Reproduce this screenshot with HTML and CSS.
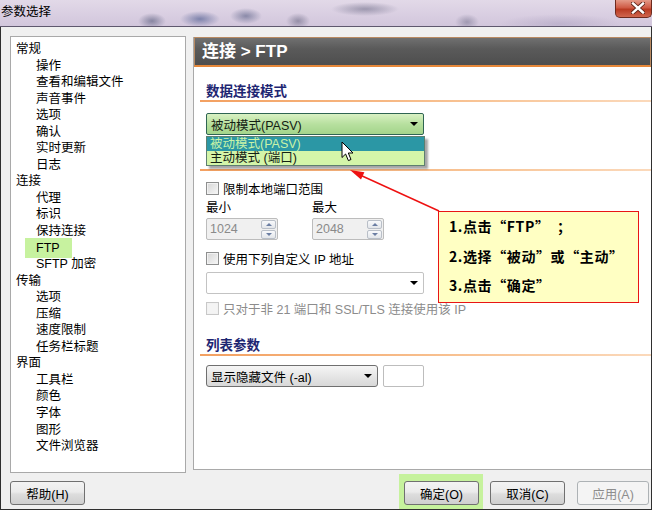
FILE: index.html
```html
<!DOCTYPE html>
<html lang="zh-CN">
<head>
<meta charset="utf-8">
<title>参数选择</title>
<link rel="stylesheet" href="styles.css">
</head>
<body>
<div class="window">
  <header class="titlebar">
    <span class="title">参数选择</span>
    <button class="close-btn" aria-label="关闭">
      <svg width="14" height="12" viewBox="0 0 14 12">
        <path d="M2 1.5 L12 10.5 M12 1.5 L2 10.5" stroke="#5e2418" stroke-width="4.2" stroke-linecap="square"/>
        <path d="M2 1.5 L12 10.5 M12 1.5 L2 10.5" stroke="#ffffff" stroke-width="2.4" stroke-linecap="square"/>
      </svg>
    </button>
  </header>

  <div class="frame">
    <div class="main">
      <ul class="tree">
        <li class="node">常规</li>
        <li class="leaf">操作</li>
        <li class="leaf">查看和编辑文件</li>
        <li class="leaf">声音事件</li>
        <li class="leaf">选项</li>
        <li class="leaf">确认</li>
        <li class="leaf">实时更新</li>
        <li class="leaf">日志</li>
        <li class="node">连接</li>
        <li class="leaf">代理</li>
        <li class="leaf">标识</li>
        <li class="leaf">保持连接</li>
        <li class="leaf"><span class="selected">FTP</span></li>
        <li class="leaf">SFTP 加密</li>
        <li class="node">传输</li>
        <li class="leaf">选项</li>
        <li class="leaf">压缩</li>
        <li class="leaf">速度限制</li>
        <li class="leaf">任务栏标题</li>
        <li class="node">界面</li>
        <li class="leaf">工具栏</li>
        <li class="leaf">颜色</li>
        <li class="leaf">字体</li>
        <li class="leaf">图形</li>
        <li class="leaf">文件浏览器</li>
      </ul>

      <section class="page">
        <div class="page-header">连接 &gt; FTP</div>
        <div class="page-body">
          <h3 class="group-title">数据连接模式</h3>
          <div class="combo combo-green">
            <span>被动模式(PASV)</span>
            <i class="combo-arrow"></i>
            <ul class="combo-list">
              <li class="opt opt-hot">被动模式(PASV)</li>
              <li class="opt">主动模式 (端口)</li>
            </ul>
          </div>

          <div class="group-rule"></div>

          <label class="check check-first"><i class="box"></i>限制本地端口范围</label>

          <div class="ports">
            <span class="port-label">最小</span>
            <span class="port-label">最大</span>
            <div class="spin">
              <span>1024</span>
              <span class="spin-btns"><i class="up"></i><i class="down"></i></span>
            </div>
            <div class="spin">
              <span>2048</span>
              <span class="spin-btns"><i class="up"></i><i class="down"></i></span>
            </div>
          </div>

          <label class="check check-ip"><i class="box"></i>使用下列自定义 IP 地址</label>

          <div class="combo combo-ip"><i class="combo-arrow"></i></div>

          <label class="check check-off"><i class="box"></i>只对于非 21 端口和 SSL/TLS 连接使用该 IP</label>

          <h3 class="group-title group-list">列表参数</h3>
          <div class="list-row">
            <div class="combo combo-btn">
              <span>显示隐藏文件 (-al)</span>
              <i class="combo-arrow"></i>
            </div>
            <div class="small-field"></div>
          </div>
        </div>
      </section>
    </div>

    <div class="buttons">
      <button class="btn">帮助(H)</button>
      <span class="spacer"></span>
      <span class="ok-mark"><button class="btn">确定(O)</button></span>
      <button class="btn btn-cancel">取消(C)</button>
      <button class="btn btn-off">应用(A)</button>
    </div>
  </div>

  <!-- callout with steps, pointing at the transfer-mode list -->
  <svg class="callout-arrow" width="110" height="60" viewBox="0 0 110 60">
    <line x1="99" y1="51" x2="20" y2="15" stroke="#ee1111" stroke-width="1.4"/>
    <polygon points="10,10 24.4,12.3 21,19.5" fill="#ee1111"/>
  </svg>
  <div class="callout">
    <p>1.点击“FTP”　；</p>
    <p>2.选择“被动”或“主动”</p>
    <p>3.点击“确定”</p>
  </div>

  <svg class="cursor" width="14" height="22" viewBox="0 0 14 22">
    <path d="M1 1 L1 16.5 L4.6 13 L7.4 19.6 L10 18.5 L7.3 12 L12 12 Z" fill="#ffffff" stroke="#000000" stroke-width="1" stroke-linejoin="miter"/>
  </svg>
</div>
</body>
</html>
```

FILE: styles.css
```css
* {
  box-sizing: border-box;
  margin: 0;
  padding: 0;
}

html,
body {
  width: 652px;
  height: 510px;
  overflow: hidden;
}

body {
  font-family: "Liberation Sans", "Noto Sans CJK SC", sans-serif;
  font-size: 12.5px;
  color: #000;
  background: #f0f0f0;
}

.window {
  position: relative;
  width: 652px;
  height: 510px;
  display: flex;
  flex-direction: column;
}

/* ---------- title bar ---------- */
.titlebar {
  height: 27px;
  flex: none;
  display: flex;
  align-items: flex-start;
  border-bottom: 1px solid #5f586e;
  background:
    radial-gradient(ellipse 14px 8px at 152px 21px, rgba(70, 76, 110, 0.55), transparent),
    radial-gradient(ellipse 20px 8px at 200px 19px, rgba(52, 70, 128, 0.55), transparent),
    radial-gradient(ellipse 16px 8px at 246px 16px, rgba(60, 70, 112, 0.5), transparent),
    radial-gradient(ellipse 12px 8px at 298px 21px, rgba(70, 70, 100, 0.45), transparent),
    radial-gradient(ellipse 34px 7px at 365px 9px, rgba(80, 80, 110, 0.45), transparent),
    radial-gradient(ellipse 12px 8px at 467px 22px, rgba(80, 80, 110, 0.4), transparent),
    radial-gradient(ellipse 60px 10px at 560px 24px, rgba(150, 140, 175, 0.35), transparent),
    linear-gradient(#e2d9e8, #d2c6dc);
}

.title {
  padding-left: 1px;
  line-height: 25px;
  font-size: 12.5px;
  color: #000;
}

.close-btn {
  margin-left: auto;
  width: 37px;
  height: 18px;
  border: 1px solid #6d2a1e;
  border-top: none;
  border-radius: 0 0 5px 5px;
  background: linear-gradient(#e49a88, #cf5b45 45%, #b93a22 55%, #d0664e);
  display: flex;
  align-items: center;
  justify-content: center;
}

.close-btn svg {
  margin-left: 8px;
  margin-top: -1px;
}

/* ---------- dialog frame ---------- */
.frame {
  flex: 1;
  display: flex;
  flex-direction: column;
  border: 1px solid #2f2f2f;
  border-top: none;
  padding: 9px 0 0 9px;
}

.main {
  display: flex;
  align-items: flex-start;
  gap: 7px;
  height: 437px;
}

.tree {
  list-style: none;
  width: 176px;
  height: 437px;
  flex: none;
  background: #fff;
  border: 1px solid #a9a9a9;
  padding-top: 4px;
  line-height: 16.55px;
}

.tree .node {
  padding-left: 5px;
}

.tree .leaf {
  padding-left: 25px;
}

.selected {
  display: inline-block;
  line-height: 16px;
  padding: 2px 12px 2px 11px;
  margin: -2px -12px -2px -11px;
  background: #c7f29f;
}

/* ---------- settings page ---------- */
.page {
  flex: 1;
  height: 433px;
  margin-top: 1px;
  background: #fff;
  border-left: 1px solid #a9a9a9;
  border-bottom: 1px solid #a9a9a9;
  display: flex;
  flex-direction: column;
}

.page-header {
  height: 30px;
  padding-left: 7px;
  line-height: 27px;
  font-size: 17px;
  font-weight: bold;
  color: #fff;
  background: linear-gradient(#707070, #5a5a5a 40%, #4e4e4e);
  border: 1px solid #b98a62;
  border-bottom: 2px solid #e6883a;
}

.page-body {
  padding-left: 12px;
}

.group-title {
  margin-top: 17px;
  margin-left: -6px;
  padding-left: 6px;
  padding-bottom: 2px;
  line-height: 16px;
  font-size: 13.5px;
  font-weight: bold;
  color: #1e2672;
  background: linear-gradient(to right, #f3a061, #f8c394 60%, #fbd9bb) left bottom / 100% 2px no-repeat;
}

.group-rule {
  margin-top: 34px;
  margin-left: -6px;
  height: 2px;
  background: linear-gradient(to right, #f3a061, #f8c394 60%, #fbd9bb);
}

.group-list {
  margin-top: 22px;
}

/* ---------- combo boxes ---------- */
.combo {
  position: relative;
  display: flex;
  align-items: center;
  width: 218px;
  height: 22px;
  padding-left: 4px;
  border: 1px solid #bdbdbd;
  border-radius: 2px;
  background: #fff;
}

.combo-arrow {
  margin-left: auto;
  margin-right: 5px;
  width: 0;
  height: 0;
  border-top: 4px solid #000;
  border-left: 4px solid transparent;
  border-right: 4px solid transparent;
}

.combo-green {
  margin-top: 11px;
  border-color: #2f6553;
  background: linear-gradient(#d9f1c3, #b7e09f 50%, #a3d48b);
  color: #132013;
}

.combo-list {
  position: absolute;
  left: -1px;
  top: 22px;
  width: 219px;
  list-style: none;
  border: 1px solid #5d7f70;
  box-shadow: 3px 3px 2px rgba(0, 0, 0, 0.35);
  background: #d4f5a9;
  z-index: 2;
}

.opt {
  height: 14px;
  line-height: 14px;
  padding-left: 3px;
  color: #122012;
}

.opt-hot {
  background: #2b97a5;
  color: #c9f3a7;
}

.combo-ip {
  margin-top: 6px;
  border-color: #c3c3c3;
}

.combo-btn {
  width: 172px;
  border-color: #6f6f6f;
  border-radius: 3px;
  background: linear-gradient(#f5f5f5, #e6e6e6 50%, #d8d8d8);
}

.list-row {
  margin-top: 9px;
  display: flex;
  gap: 5px;
}

.small-field {
  width: 41px;
  height: 22px;
  border: 1px solid #bdbdbd;
  border-radius: 2px;
  background: #fff;
}

/* ---------- check boxes ---------- */
.check {
  display: flex;
  align-items: center;
  gap: 4px;
  height: 16px;
}

.box {
  width: 13px;
  height: 13px;
  flex: none;
  border: 1px solid #8e8f8f;
  background: linear-gradient(135deg, #d6d6d6, #f7f7f7);
  box-shadow: inset 0 0 0 1px #f2f2f2;
}

.check-first {
  margin-top: 9px;
}

.check-ip {
  margin-top: 10px;
}

.check-off {
  margin-top: 6px;
  color: #8c8c8c;
}

.check-off .box {
  border-color: #c8c8c8;
  background: #f4f4f4;
}

/* ---------- port range ---------- */
.ports {
  display: grid;
  grid-template-columns: 106px 106px;
  row-gap: 2px;
  margin-top: 4px;
}

.port-label {
  line-height: 16px;
}

.spin {
  display: flex;
  align-items: center;
  width: 72px;
  height: 22px;
  padding-left: 3px;
  border: 1px solid #bcbcbc;
  border-radius: 2px;
  background: #f0f0f0;
  color: #8a8a8a;
}

.spin-btns {
  margin-left: auto;
  margin-right: 1px;
  display: flex;
  flex-direction: column;
  gap: 1px;
}

.spin-btns i {
  position: relative;
  width: 15px;
  height: 9px;
  border: 1px solid #b9bfc8;
  border-radius: 2px;
  background: linear-gradient(#f8f9fb, #e3e6ea);
}

.spin-btns i::after {
  content: "";
  position: absolute;
  left: 4px;
  width: 0;
  height: 0;
  border-left: 3px solid transparent;
  border-right: 3px solid transparent;
}

.spin-btns .up::after {
  top: 2px;
  border-bottom: 3px solid #6b7ea3;
}

.spin-btns .down::after {
  top: 2px;
  border-top: 3px solid #6b7ea3;
}

/* ---------- bottom buttons ---------- */
.buttons {
  flex: 1;
  display: flex;
  align-items: flex-start;
}

.spacer {
  flex: 1;
}

.btn {
  font: inherit;
  margin-top: 8px;
  width: 75px;
  height: 24px;
  border: 1px solid #707070;
  border-radius: 3px;
  background: linear-gradient(#f3f3f3, #ebebeb 45%, #dddddd 55%, #cfcfcf);
  color: #000;
}

.ok-mark {
  align-self: stretch;
  margin-top: 1px;
  padding: 0 4px 0 5px;
  background: #c6f29d;
}

.ok-mark .btn {
  margin-top: 7px;
}

.btn-cancel {
  margin-left: 7px;
}

.btn-off {
  margin-left: 12px;
  width: 72px;
  margin-right: 2px;
  border-color: #adb2b5;
  background: #f4f4f4;
  color: #8d8d8d;
}

/* ---------- overlays ---------- */
.callout {
  position: absolute;
  left: 438px;
  top: 211px;
  width: 201px;
  height: 92px;
  padding-left: 10px;
  border: 1px solid #e81515;
  background: #ffffc3;
  font-family: "Noto Sans CJK SC", sans-serif;
  font-size: 14px;
  letter-spacing: 0.6px;
  font-weight: bold;
  line-height: 29.5px;
  white-space: nowrap;
}

.callout-arrow {
  position: absolute;
  left: 340px;
  top: 160px;
}

.cursor {
  position: absolute;
  left: 341px;
  top: 141px;
  z-index: 3;
}
```
